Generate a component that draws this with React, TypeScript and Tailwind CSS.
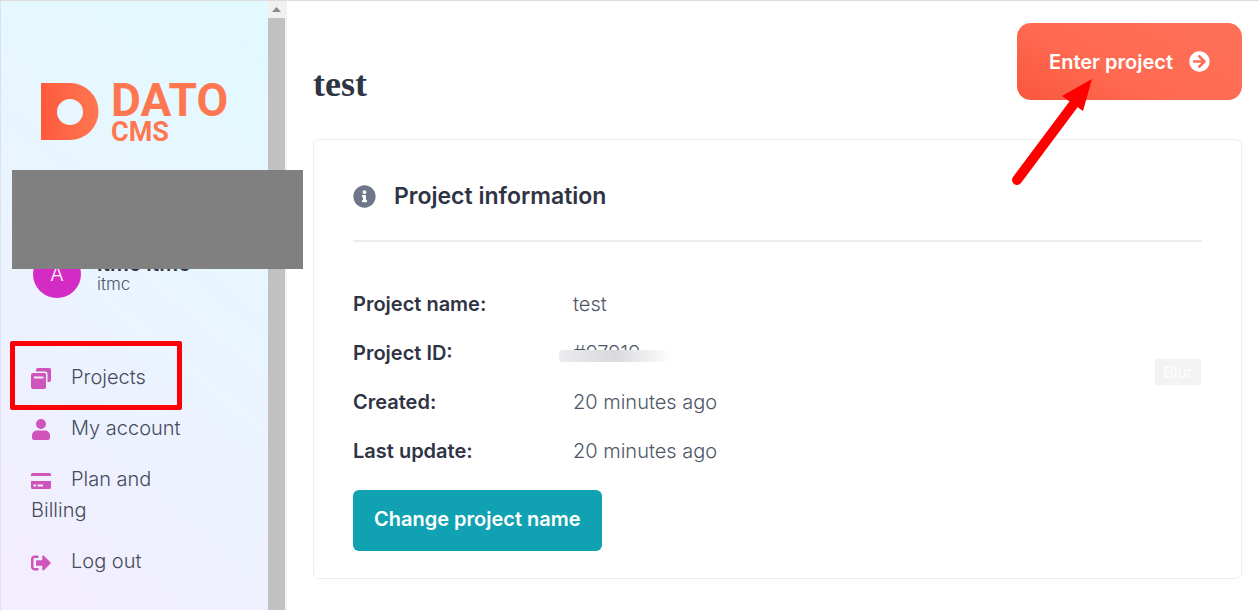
import type { ReactNode } from "react";
import { FaArrowCircleRight, FaInfoCircle, FaSignOutAlt } from "react-icons/fa";

function Logo() {
  return (
    <a href="#" className="flex gap-3" aria-label="Dato CMS">
      <svg width="58" height="58" viewBox="0 0 58 58" aria-hidden="true">
        <defs>
          <linearGradient id="logo" x1="0" y1="0" x2="1" y2="0">
            <stop offset="0" stopColor="#ff593d" />
            <stop offset="1" stopColor="#ff7751" />
          </linearGradient>
        </defs>
        <path
          fill="url(#logo)"
          fillRule="evenodd"
          d="M0 0h29a28.500 28.500 0 0 1 0 57H0zM29 16a13 13 0 1 0 0 26a13 13 0 0 0 0-26z"
        />
      </svg>
      <span className="flex flex-col font-[Roboto,sans-serif] font-bold text-[#ff7751]">
        <span className="text-[46px] leading-[34px]">DATO</span>
        <span className="text-[27px] leading-[30px]">CMS</span>
      </span>
    </a>
  );
}

function ProjectsIcon() {
  return (
    <svg width="20" height="21" viewBox="0 0 20 21" fill="currentColor">
      <path d="M7 0h11.500a1.500 1.500 0 0 1 1.500 1.500V12a2 2 0 0 1-2 2h-1.500V6a2.500 2.500 0 0 0-2.500-2.500H5V2a2 2 0 0 1 2-2z" />
      <path
        fillRule="evenodd"
        d="M2 5h11.500a1.500 1.500 0 0 1 1.500 1.500V19a2 2 0 0 1-2 2H2a2 2 0 0 1-2-2V7a2 2 0 0 1 2-2zM3 8.500v2h9.500v-2z"
      />
    </svg>
  );
}

function UserIcon() {
  return (
    <svg width="20" height="21" viewBox="0 0 20 21" fill="currentColor">
      <circle cx="10" cy="5" r="5" />
      <path d="M6 11.500h8a5 5 0 0 1 5 5V19a2 2 0 0 1-2 2H3a2 2 0 0 1-2-2v-2.500a5 5 0 0 1 5-5z" />
    </svg>
  );
}

function CardIcon() {
  return (
    <svg width="20" height="16" viewBox="0 0 20 16" fill="currentColor">
      <path d="M1.500 0h17A1.500 1.500 0 0 1 20 1.500V3H0V1.500A1.500 1.500 0 0 1 1.500 0z" />
      <path
        fillRule="evenodd"
        d="M0 8h20v6.500a1.500 1.500 0 0 1-1.500 1.500h-17A1.500 1.500 0 0 1 0 14.500zM2.500 11.500v2H5v-2zM6.500 11.500v2h5.500v-2z"
      />
    </svg>
  );
}

function NavItem({
  icon,
  label,
  marked = false,
}: {
  icon: ReactNode;
  label: string;
  marked?: boolean;
}) {
  return (
    <li className="relative pr-16">
      <a href="#">
        <span className="inline-block align-middle mr-5 text-[#cf54bb]">
          {icon}
        </span>
        {label}
      </a>
      {marked && (
        <span className="absolute -left-[21px] -top-[21px] w-[172px] h-[69px] rounded-xs border-5 border-[#fb0007]" />
      )}
    </li>
  );
}

function Sidebar() {
  return (
    <aside className="relative flex w-[287px] shrink-0">
      <div className="flex-1 border-l border-[#dde0f0] bg-[linear-gradient(40deg,#f5edfd,#eef1ff_30%,#e6f7ff_72%,#e1f9ff)] pt-[82px]">
        <div className="pl-10">
          <Logo />
        </div>

        <div className="mt-[103px] flex items-center gap-4 pl-8">
          <span className="flex size-12 items-center justify-center rounded-full bg-[#d42bc5] text-xl font-light text-white">
            A
          </span>
          <div className="flex flex-col">
            <strong className="text-[21px] leading-5 font-semibold">
              itmc itmc
            </strong>
            <span className="text-[17px] leading-5 font-light text-[#4f5666]">
              itmc
            </span>
          </div>
        </div>

        <nav className="mt-16 pl-[30px]">
          <ul className="flex flex-col gap-5 text-xl leading-[31px] font-light text-[#454c5c]">
            <NavItem icon={<ProjectsIcon />} label="Projects" marked />
            <NavItem icon={<UserIcon />} label="My account" />
            <NavItem icon={<CardIcon />} label="Plan and Billing" />
            <NavItem icon={<FaSignOutAlt size={20} />} label="Log out" />
          </ul>
        </nav>
      </div>

      {/* scrollbar */}
      <div className="flex w-[19px] flex-col bg-[#f1f1f1] pr-0.5">
        <div className="flex h-[17px] items-center justify-center">
          <svg width="9" height="5" viewBox="0 0 9 5" fill="#8b8b8b">
            <path d="M4.500 0L9 5H0z" />
          </svg>
        </div>
        <div className="flex-1 bg-[#c1c1c1]" />
      </div>

      <div className="absolute left-3 top-[169px] h-[99px] w-[291px] bg-[#808080]" />
    </aside>
  );
}

function InfoRow({ label, children }: { label: string; children: ReactNode }) {
  return (
    <div className="flex">
      <dt className="w-[220px] font-semibold">{label}</dt>
      <dd className="font-light text-[#4f5666]">{children}</dd>
    </div>
  );
}

export default function App() {
  return (
    <div className="flex min-h-screen border-t border-[#dcdcdc] bg-white font-[Inter,sans-serif] text-[#2f3445]">
      <Sidebar />

      <main className="min-w-0 flex-1 pt-[22px] pr-[17px] pb-7 pl-[26px]">
        <header className="relative z-10 flex items-start justify-between">
          <h1 className="pt-[45px] font-['Liberation_Serif',serif] text-4xl leading-8 font-bold">
            test
          </h1>
          <button className="flex h-[77px] items-center gap-4 rounded-[14px] bg-[linear-gradient(30deg,#f8573c,#ff6a51_40%,#ff7059)] px-8 text-xl font-semibold text-white">
            Enter project
            <FaArrowCircleRight size={21} />
          </button>
          <svg
            className="absolute right-[149px] top-[54px]"
            width="82"
            height="110"
            viewBox="0 0 82 110"
            aria-hidden="true"
          >
            <path
              d="M6 103L62 28"
              stroke="#fe0000"
              strokeWidth="10"
              strokeLinecap="round"
            />
            <path d="M81 2L51 19L72 34z" fill="#fe0000" />
          </svg>
        </header>

        <section className="relative mt-[39px] rounded-md border border-[#eeeeef] px-[39px] pt-10 pb-[27px]">
          <h2 className="flex items-center gap-[18px] text-[23px] leading-8 font-semibold">
            <FaInfoCircle size={23} className="text-[#6f7689]" />
            Project information
          </h2>
          <hr className="mt-7 border-t-2 border-[#ececee]" />

          <dl className="mt-[47px] flex flex-col gap-[18px] text-xl leading-[31px]">
            <InfoRow label="Project name:">test</InfoRow>
            <InfoRow label="Project ID:">
              <span className="relative block">
                #97919
                <span className="absolute -left-3.5 top-3 h-5 w-28 bg-white">
                  <span className="block h-3 rounded-sm bg-linear-to-r from-[#ececee] via-[#d9dadc] to-white" />
                </span>
              </span>
            </InfoRow>
            <InfoRow label="Created:">20 minutes ago</InfoRow>
            <InfoRow label="Last update:">20 minutes ago</InfoRow>
          </dl>

          <button className="mt-[23px] h-[61px] rounded-md bg-[#10a2b2] px-[21px] pb-1 text-xl font-semibold text-white">
            Change project name
          </button>

          <span className="absolute right-10 top-[219px] rounded-xs bg-[#f3f3f3] px-2 text-base leading-[26px] text-white">
            Blur
          </span>
        </section>
      </main>
    </div>
  );
}
